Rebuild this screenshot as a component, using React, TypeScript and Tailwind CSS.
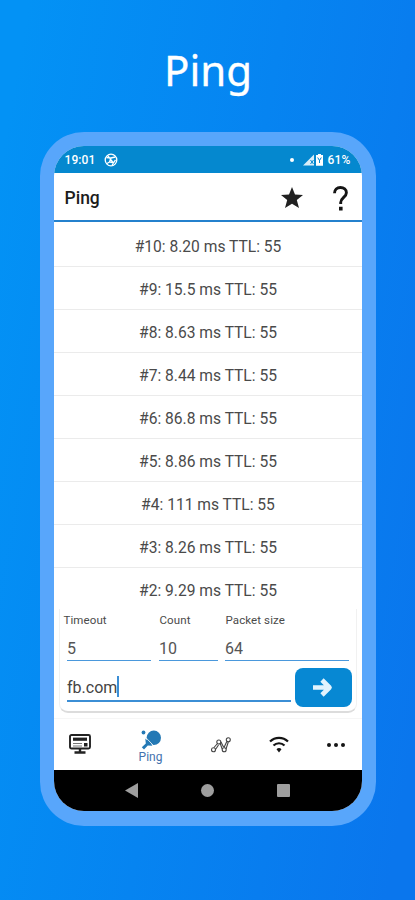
import type { ReactNode } from "react";

const RESULTS = [
  { seq: 10, time: "8.20" },
  { seq: 9, time: "15.5" },
  { seq: 8, time: "8.63" },
  { seq: 7, time: "8.44" },
  { seq: 6, time: "86.8" },
  { seq: 5, time: "8.86" },
  { seq: 4, time: "111" },
  { seq: 3, time: "8.26" },
  { seq: 2, time: "9.29" },
];

export default function App() {
  return (
    <div className="flex h-[900px] w-[415px] flex-col items-center overflow-hidden bg-[linear-gradient(100deg,#0392f5_5%,#0684f1_50%,#0a76ed_95%)] font-[Roboto,sans-serif]">
      <h1 className="flex h-[132px] items-center pt-[8px] pl-[1px] font-['Noto_Sans',sans-serif] text-[42px] leading-none text-white [-webkit-text-stroke:0.3px_white]">Ping</h1>

      {/* phone frame */}
      <div className="h-[694px] w-[336px] rounded-[44px] bg-[#58a6fb] p-[14px] pb-[15px]">
        <div className="flex h-full flex-col overflow-hidden rounded-[30px] bg-white">
          <StatusBar />
          <Header />
          <ul className="h-[387px] shrink-0 overflow-hidden pt-[2px]">
            {RESULTS.map((r) => (
              <li key={r.seq} className="flex h-[43px] items-center justify-center border-b border-[#ebebeb] pt-[5px] pl-[1px] text-[15.600px] text-[#4a4a4a]">
                #{r.seq}: {r.time} ms TTL: 55
              </li>
            ))}
          </ul>
          <PingForm />
          <TabBar />
          <NavBar />
        </div>
      </div>
    </div>
  );
}

function StatusBar() {
  return (
    <div className="flex h-[27px] shrink-0 items-center bg-[#0588cf] pr-[11px] pl-[11px] text-[12px] font-medium text-white">
      <span className="tracking-[0.1px]">19:01</span>
      <svg className="ml-[9px] h-[14px] w-[14px]" viewBox="0 0 14 14" fill="none" stroke="#fff" strokeWidth="1.3">
        <circle cx="7" cy="7" r="5.8" />
        <path d="M2.5 4.5 7 5l4.300-1M7 5l-1.500 4 4 .8 2-3M5.500 9 3 10.500M9.500 9.800 8 12.500M4 3l5 6.500" />
      </svg>
      <span className="ml-auto h-[4px] w-[4px] rounded-full bg-white" />
      <svg className="ml-[9px] h-[12px] w-[22px]" viewBox="0 0 22 12">
        <path d="M0 11.500 11 .5v11z" fill="#fff" fillOpacity=".85" />
        <path d="m7.500 6 3 4M10.500 6l-3 4" stroke="#0588cf" />
        <path d="M15 1V0h3v1h2v10.800h-7V1z" fill="#fff" />
        <path d="m14.700 3.500 1.800 3 1.800-3M16.500 6v3" stroke="#0588cf" fill="none" />
      </svg>
      <span className="ml-[2px] tracking-[0.2px]">61%</span>
    </div>
  );
}

function Header() {
  return (
    <header className="flex h-[49px] shrink-0 items-center border-b-2 border-[#2481cd] pr-[14px] pl-[11px]">
      <h2 className="pt-[4px] text-[17.500px] font-medium text-[#1c1c1c]">Ping</h2>
      <svg className="mt-[3px] ml-auto h-[22px] w-[22px]" viewBox="0 0 22 22" fill="#212121">
        <path d="m11 0 3 7.500 8 .5-6.200 5.100L18 21l-7-4.300L4 21l2.200-7.900L0 8l8-.5z" />
      </svg>
      <svg className="mt-[3px] ml-[30px] h-[25px] w-[15px]" viewBox="0 0 15 25" fill="none" stroke="#151515" strokeWidth="2.900">
        <path d="M1.500 7.200C1.500 3.500 4 1.500 7.400 1.500s6 2 6 5.200c0 4.500-5.700 5-5.700 9.900V18" />
        <path d="M6 20.800h3.600v3.600H6z" fill="#151515" stroke="none" />
      </svg>
    </header>
  );
}

function Field({ label, value, className }: { label: string; value: string; className: string }) {
  return (
    <div className={className}>
      <div className="h-[22px] text-[11.500px] leading-[20px] tracking-[0.1px] text-[#4a4a4a]">{label}</div>
      <div className="h-[29px] border-b border-[#4a98dc] pl-[0.500px] text-[16px] leading-[33px] text-[#555]">{value}</div>
    </div>
  );
}

function PingForm() {
  return (
    <div className="mx-[5px] h-[104px] shrink-0 rounded-b-[9px] border-x border-b-2 border-x-[#f1f1f1] border-b-[#dcdcdc] bg-white pt-[1px] pl-[7px]">
      <div className="flex">
        <Field label="Timeout" value="5" className="w-[84px] [&>div:first-child]:-ml-[3px]" />
        <Field label="Count" value="10" className="ml-[8px] w-[59px] [&>div:first-child]:ml-[1px]" />
        <Field label="Packet size" value="64" className="ml-[7px] w-[124px] [&>div:first-child]:ml-[1px]" />
      </div>
      <div className="flex">
        <div className="mt-[12px] flex h-[29px] w-[224px] items-center border-b-2 border-[#3b8ed5] pt-[2px] pl-[0.500px] text-[16px] text-[#444]">
          fb.com
          <span className="-mt-[2px] h-[21px] w-[2px] bg-[#3b8ed5]" />
        </div>
        <button className="mt-[7px] ml-[4px] flex h-[39px] w-[57px] items-center justify-center rounded-[8px] bg-[#0788d3]">
          <svg className="h-[19px] w-[20px]" viewBox="0 0 20 19" fill="none" stroke="#e2f3fd" strokeWidth="4.600">
            <path d="M0 9.500h16M9 2l7.500 7.500L9 17" strokeLinejoin="round" />
          </svg>
        </button>
      </div>
    </div>
  );
}

function Tab({ children, className }: { children: ReactNode; className: string }) {
  return <div className={`flex flex-col items-center ${className}`}>{children}</div>;
}

function TabBar() {
  return (
    <nav className="mt-[5px] flex h-[52px] shrink-0 border-t border-[#f6f6f6] pl-[1px]">
      <Tab className="w-[50px] pt-[15px]">
        <svg className="h-[20px] w-[22px]" viewBox="0 0 22 20" fill="none" stroke="#222">
          <rect x="1" y="1" width="20" height="13.500" rx="1.500" strokeWidth="1.900" />
          <path d="M4 5.200h14" strokeWidth="3.200" />
          <path d="M4 9.500h9M4 12h9" strokeWidth="1" stroke="#777" />
          <rect x="15" y="9" width="3.500" height="3.500" fill="#222" stroke="none" />
          <path d="M11 14.500V18M5.500 18.500h11" strokeWidth="2.400" />
        </svg>
      </Tab>
      <Tab className="w-[92px] pt-[11px]">
        <svg className="h-[20px] w-[20px]" viewBox="0 0 20 20" fill="#2479b5">
          <circle cx="2.500" cy="2.500" r="1.900" />
          <circle cx="12.800" cy="7.800" r="7.200" />
          <path d="M4.300 8.500 11.500 15.800 6.800 15.500 3 19.500.8 17.300 4.800 13.500z" />
          <path d="m4.900 7.700 7.700 8" stroke="#fff" strokeWidth=".8" />
        </svg>
        <span className="text-[12px] leading-[14px] text-[#4372ae]">Ping</span>
      </Tab>
      <Tab className="w-[49px] pt-[18px]">
        <svg className="h-[16px] w-[20px]" viewBox="0 0 20 16" fill="none" stroke="#444" strokeWidth="1.100">
          <circle cx="2.500" cy="12.800" r="2" />
          <circle cx="7.800" cy="5" r="2" />
          <circle cx="13.200" cy="12.800" r="2" />
          <circle cx="17.300" cy="2.800" r="2" />
          <path d="M3 10.500 6 7M4.500 12.500 7.500 8M9.200 6.500l2 5.500M10 5l2.500 5M13 10.500l2.800-6M15 12l2.300-7" />
        </svg>
      </Tab>
      <Tab className="w-[66px] pt-[17px]">
        <svg className="h-[18px] w-[20px]" viewBox="0 0 20 18" fill="none" stroke="#151515" strokeWidth="2.200">
          <path d="M1 5.500C6 .6 14 .6 19 5.500M4.500 9.500c3-3 8-3 11 0" />
          <path d="M7.500 13.200c1.500-1.500 3.500-1.500 5 0L10 16.500z" fill="#151515" stroke="none" />
        </svg>
      </Tab>
      <Tab className="w-[49px] pt-[24px]">
        <svg className="h-[4px] w-[18px]" viewBox="0 0 18 4" fill="#151515">
          <circle cx="2" cy="2" r="2" />
          <circle cx="9" cy="2" r="2" />
          <circle cx="16" cy="2" r="2" />
        </svg>
      </Tab>
    </nav>
  );
}

function NavBar() {
  return (
    <div className="flex flex-1 items-center bg-black pl-[71px]">
      <svg className="h-[15px] w-[13px]" viewBox="0 0 13 15" fill="#9e9e9e">
        <path d="M0 7.500 13 0v15z" />
      </svg>
      <span className="ml-[63px] h-[13px] w-[13px] rounded-full bg-[#9e9e9e]" />
      <span className="ml-[63px] h-[13px] w-[13px] rounded-[1px] bg-[#9e9e9e]" />
    </div>
  );
}
